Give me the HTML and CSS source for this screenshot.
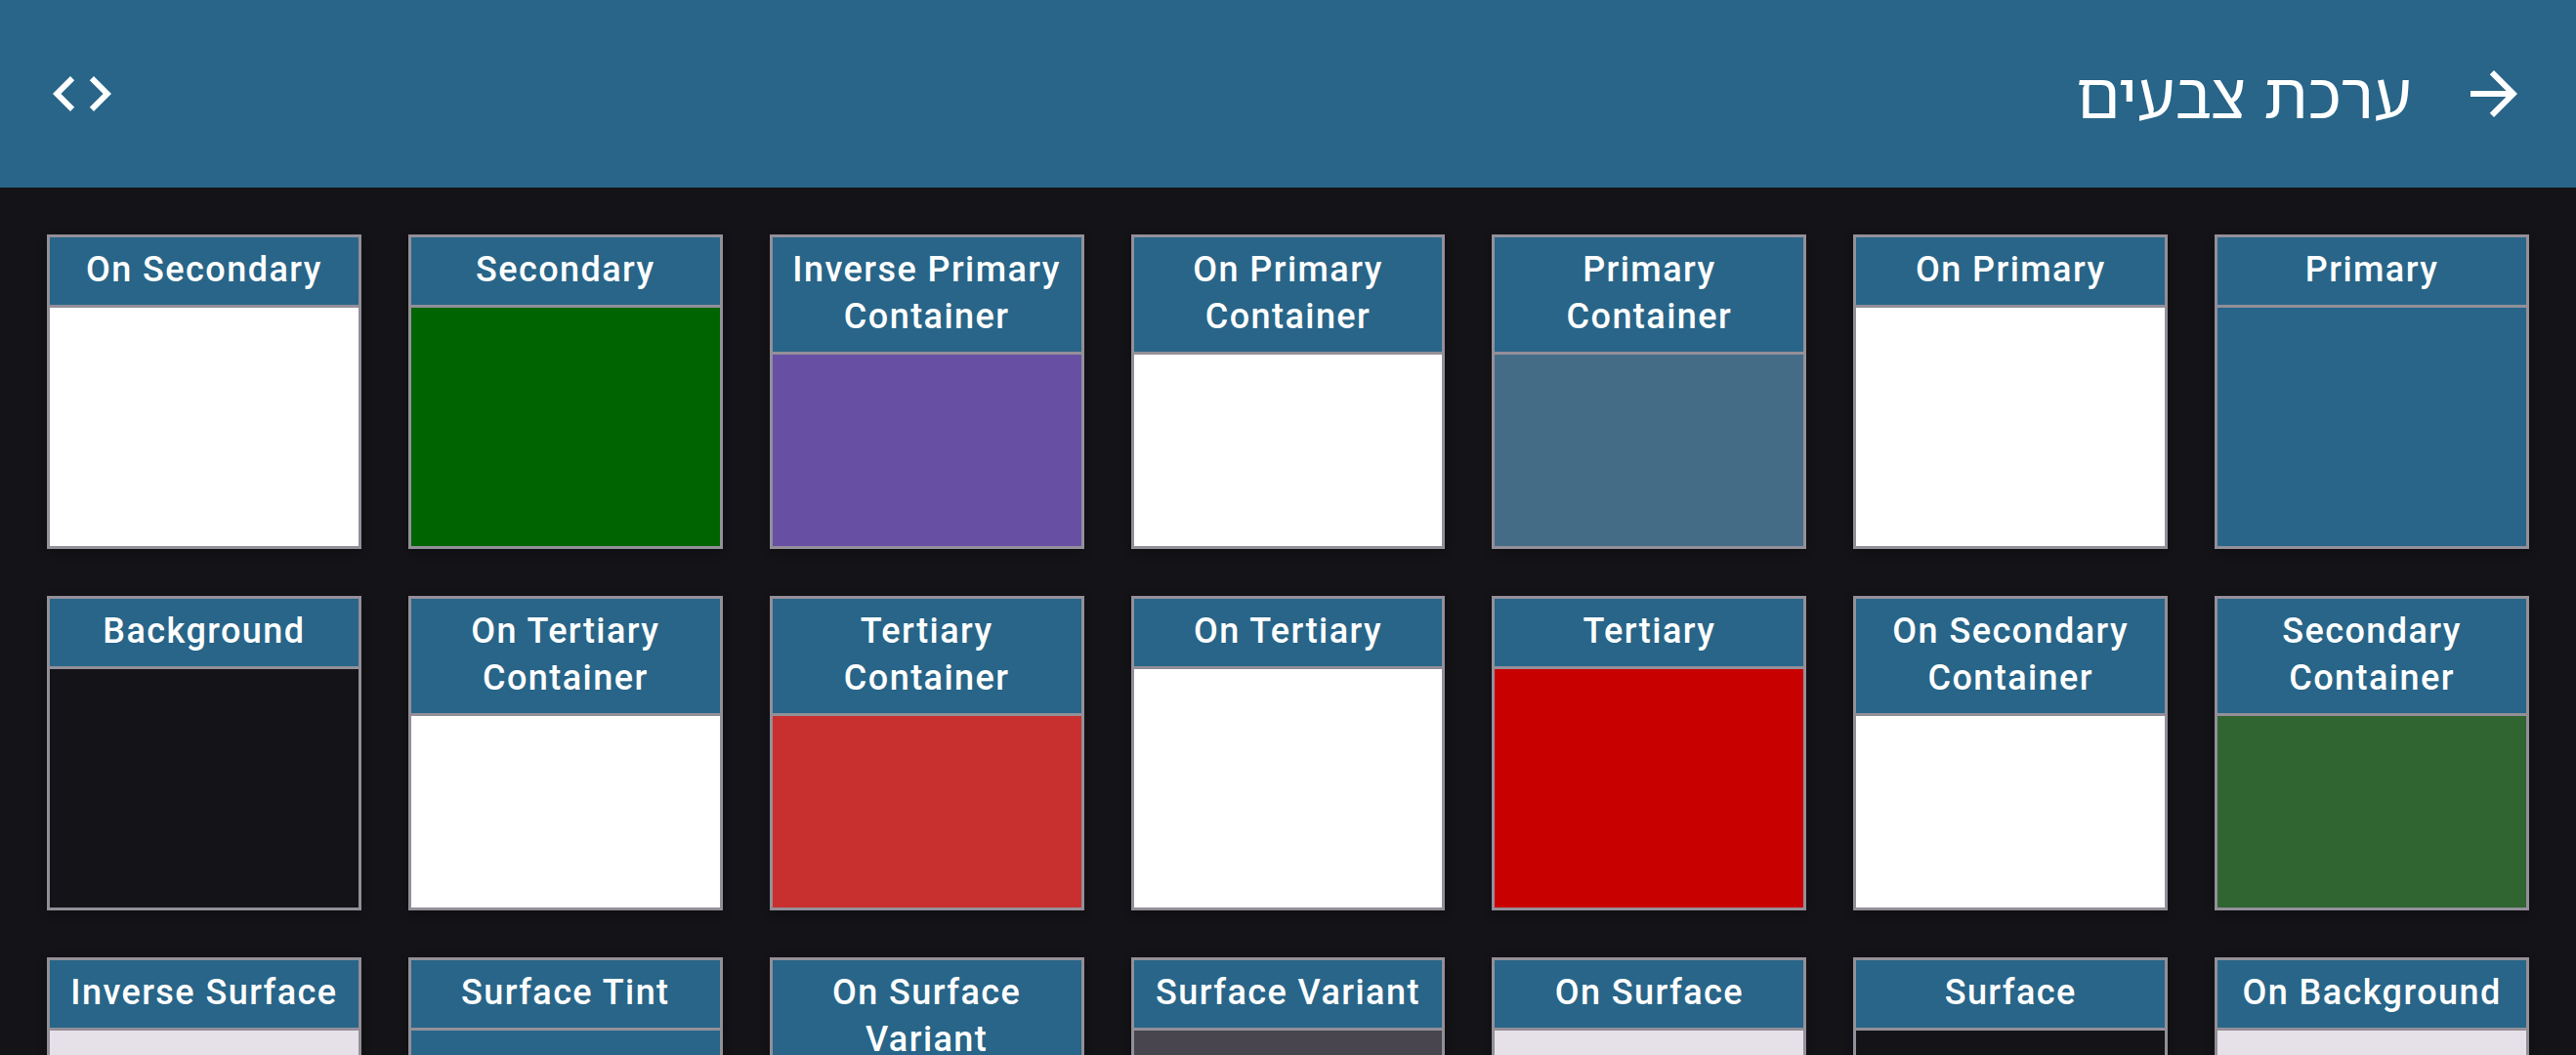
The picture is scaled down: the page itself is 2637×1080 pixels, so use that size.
FILE: index.html
```html
<!DOCTYPE html>
<html lang="he" dir="rtl">
<head>
<meta charset="utf-8">
<title>ערכת צבעים</title>
<link rel="stylesheet" href="styles.css">
</head>
<body>
<header class="app-bar">
  <button class="icon-button" type="button" aria-label="חזרה">
    <svg class="icon" viewBox="0 0 24 24" aria-hidden="true"><path d="M12 4l-1.41 1.41L16.17 11H4v2h12.17l-5.58 5.59L12 20l8-8z"/></svg>
  </button>
  <h1 class="title">ערכת צבעים</h1>
  <button class="icon-button" type="button" aria-label="קוד">
    <svg class="icon" viewBox="0 0 24 24" aria-hidden="true"><path d="M9.4 16.6L4.8 12l4.6-4.6L8 6l-6 6 6 6 1.4-1.4zm5.2 0l4.6-4.6-4.6-4.6L16 6l6 6-6 6-1.4-1.4z"/></svg>
  </button>
</header>
<main class="palette">
  <section class="card"><h2 class="label">Primary</h2><div class="swatch primary"></div></section>
  <section class="card"><h2 class="label">On Primary</h2><div class="swatch white"></div></section>
  <section class="card"><h2 class="label">Primary Container</h2><div class="swatch primary-container"></div></section>
  <section class="card"><h2 class="label">On Primary Container</h2><div class="swatch white"></div></section>
  <section class="card"><h2 class="label">Inverse Primary Container</h2><div class="swatch inverse-primary"></div></section>
  <section class="card"><h2 class="label">Secondary</h2><div class="swatch secondary"></div></section>
  <section class="card"><h2 class="label">On Secondary</h2><div class="swatch white"></div></section>

  <section class="card"><h2 class="label">Secondary Container</h2><div class="swatch secondary-container"></div></section>
  <section class="card"><h2 class="label">On Secondary Container</h2><div class="swatch white"></div></section>
  <section class="card"><h2 class="label">Tertiary</h2><div class="swatch tertiary"></div></section>
  <section class="card"><h2 class="label">On Tertiary</h2><div class="swatch white"></div></section>
  <section class="card"><h2 class="label">Tertiary Container</h2><div class="swatch tertiary-container"></div></section>
  <section class="card"><h2 class="label">On Tertiary Container</h2><div class="swatch white"></div></section>
  <section class="card"><h2 class="label">Background</h2><div class="swatch surface"></div></section>

  <section class="card"><h2 class="label">On Background</h2><div class="swatch on-surface"></div></section>
  <section class="card"><h2 class="label">Surface</h2><div class="swatch surface"></div></section>
  <section class="card"><h2 class="label">On Surface</h2><div class="swatch on-surface"></div></section>
  <section class="card"><h2 class="label">Surface Variant</h2><div class="swatch surface-variant"></div></section>
  <section class="card"><h2 class="label">On Surface Variant</h2><div class="swatch on-surface-variant"></div></section>
  <section class="card"><h2 class="label">Surface Tint</h2><div class="swatch primary"></div></section>
  <section class="card"><h2 class="label">Inverse Surface</h2><div class="swatch on-surface"></div></section>
</main>
</body>
</html>
```
FILE: styles.css
```css
:root {
  --primary: #286588;
  --surface: #141317;
  --outline: #938f99;
}

* {
  box-sizing: border-box;
}

body {
  margin: 0;
  height: 100vh;
  display: flex;
  flex-direction: column;
  background: var(--surface);
  color: #fff;
  font-family: Roboto, "Open Sans", sans-serif;
}

.app-bar {
  flex: none;
  display: flex;
  align-items: center;
  gap: 48px;
  padding: 60px 48px;
  background: var(--primary);
}

.icon-button {
  flex: none;
  padding: 0;
  border: 0;
  background: none;
  color: inherit;
  cursor: pointer;
}

.icon {
  display: block;
  width: 72px;
  height: 72px;
  fill: currentColor;
}

.title {
  flex: 1;
  margin: 0;
  font-family: "Noto Sans Hebrew", "Open Sans", sans-serif;
  font-size: 66px;
  font-weight: 400;
  line-height: 72px;
}

.palette {
  flex: 1;
  min-height: 0;
  overflow-y: auto;
  scrollbar-width: none;
  display: grid;
  grid-template-columns: repeat(7, 1fr);
  align-content: start;
  gap: 48px;
  padding: 48px;
}

.card {
  aspect-ratio: 1;
  display: flex;
  flex-direction: column;
  border: 3px solid var(--outline);
  box-shadow: 0 3px 9px rgba(0, 0, 0, 0.3);
}

.label {
  margin: 0;
  padding: 9px 12px 12px;
  border-bottom: 3px solid var(--outline);
  background: var(--primary);
  direction: ltr;
  font-size: 36px;
  font-weight: 500;
  line-height: 48px;
  letter-spacing: 0.04em;
  text-align: center;
}

.swatch {
  flex: 1;
}

.primary { background: var(--primary); }
.white { background: #fff; }
.primary-container { background: #456c86; }
.inverse-primary { background: #6750a4; }
.secondary { background: #006400; }
.secondary-container { background: #306430; }
.tertiary { background: #c80000; }
.tertiary-container { background: #c83030; }
.surface { background: var(--surface); }
.on-surface { background: #e6e1e8; }
.surface-variant { background: #49454e; }
.on-surface-variant { background: #cac4d0; }
```
